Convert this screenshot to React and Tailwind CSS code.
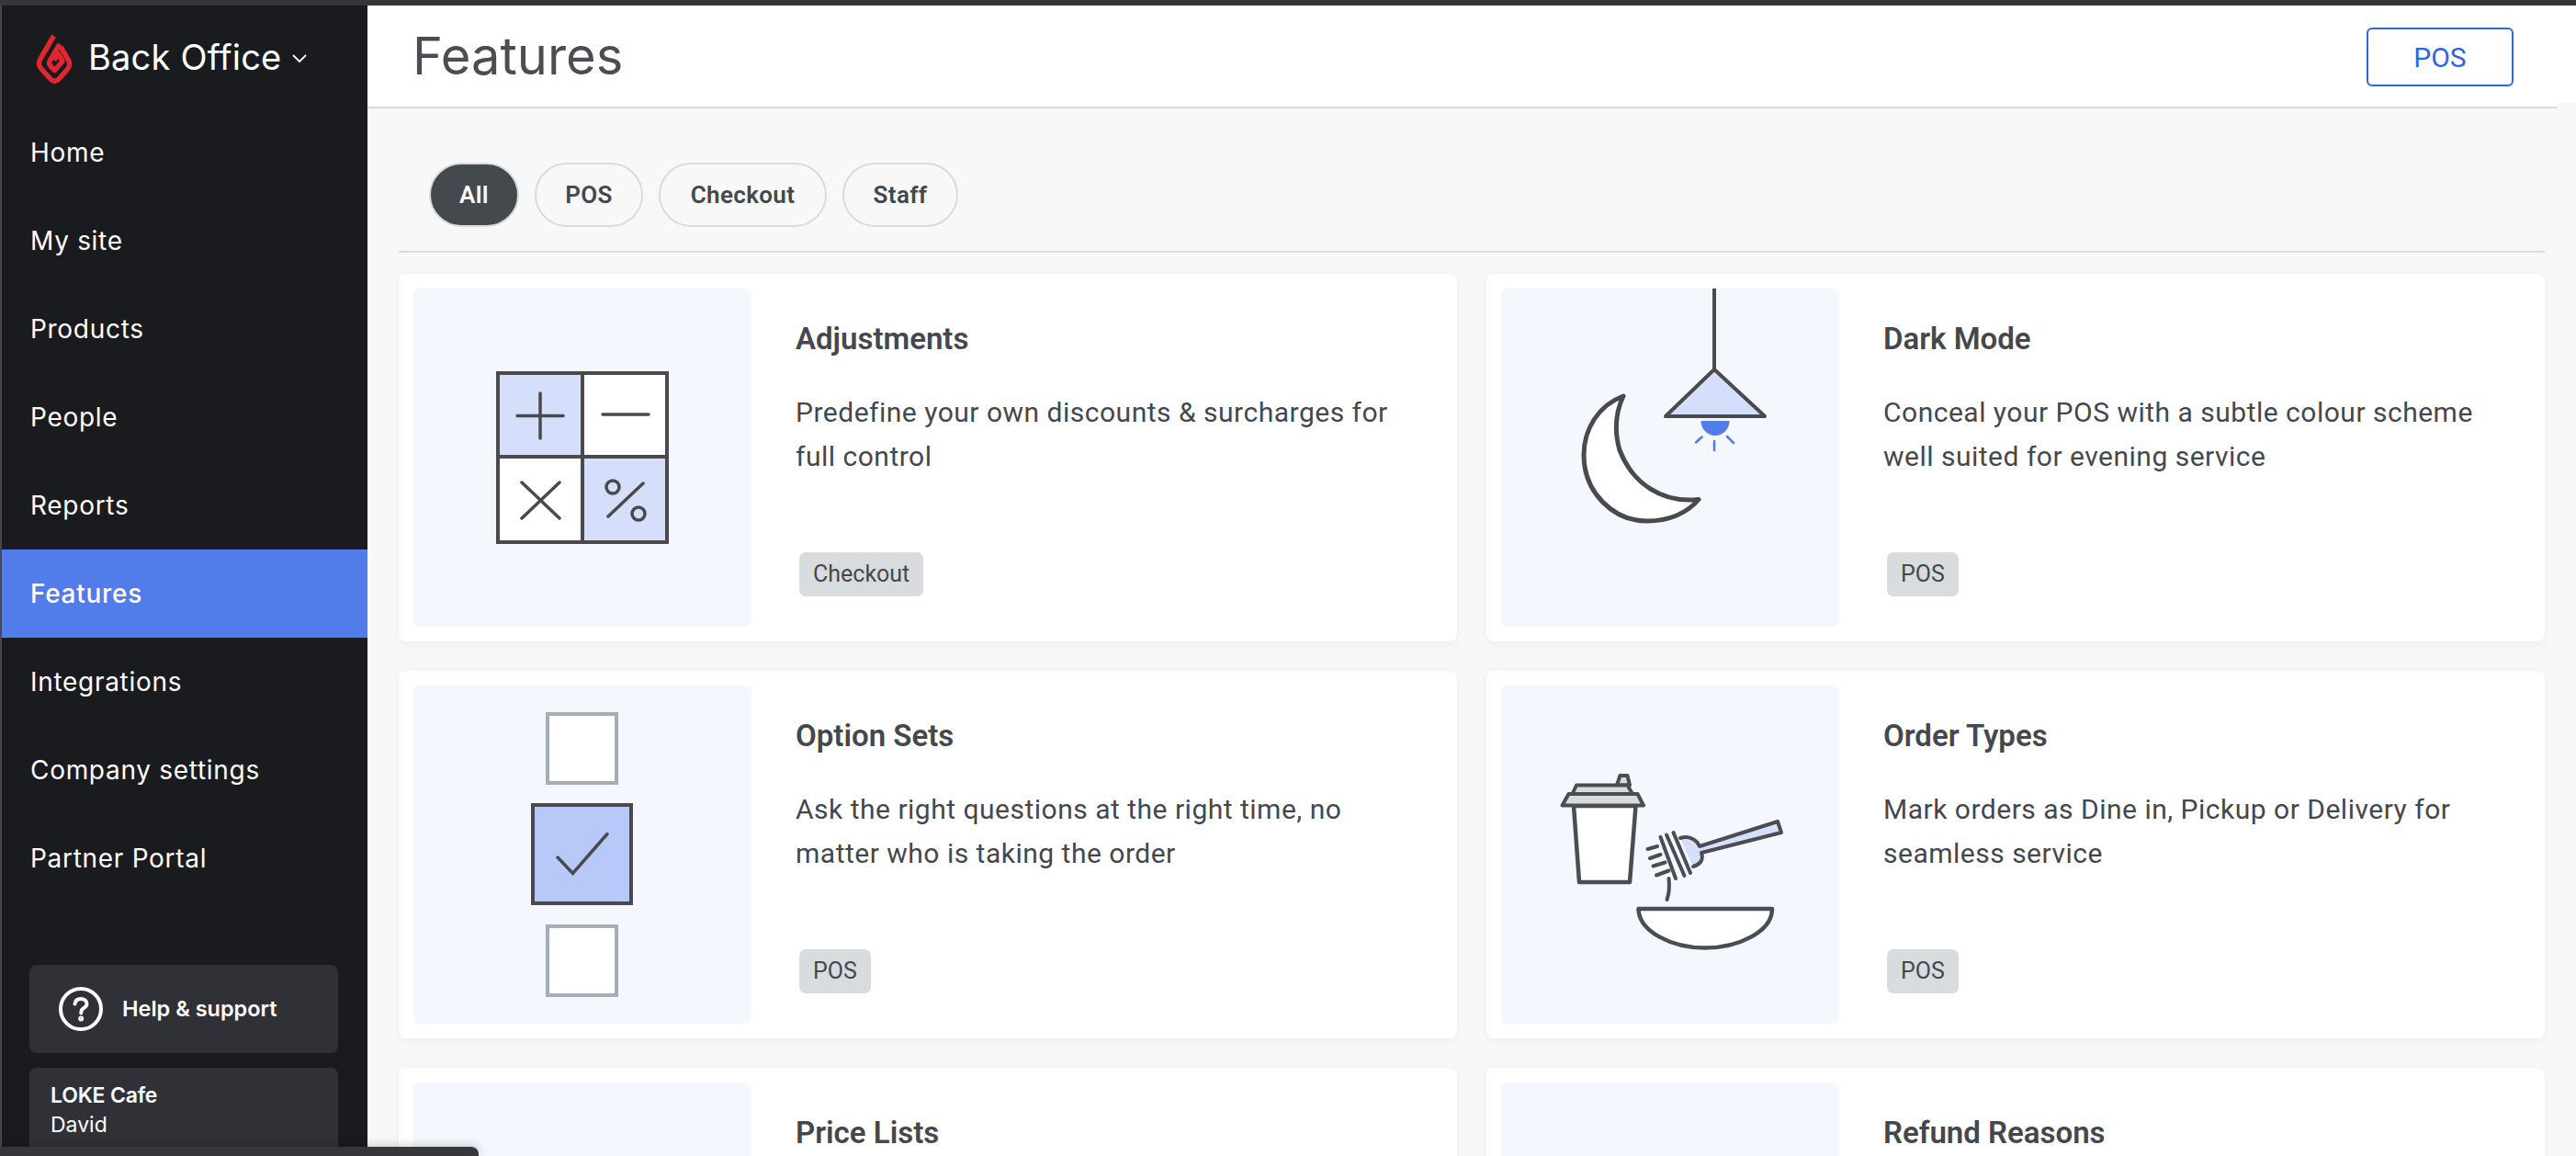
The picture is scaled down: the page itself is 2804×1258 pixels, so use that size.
import React from 'react';

const navItems = ['Home', 'My site', 'Products', 'People', 'Reports', 'Features', 'Integrations', 'Company settings', 'Partner Portal'];
const filters = [
  { label: 'All', width: 'w-[98px]' },
  { label: 'POS', width: 'w-[118px]' },
  { label: 'Checkout', width: 'w-[183px]' },
  { label: 'Staff', width: 'w-[126px]' },
];

const INK = '#4a4a4c';
const TINT = '#d5dffb';

function Logo() {
  return (
    <svg width="60" height="70" viewBox="0 0 60 70" className="shrink-0 ml-[28px]" fill="none" stroke="#e0262e" strokeWidth="5.5" strokeLinejoin="round">
      <path d="M28.5 12 L14 37 Q10.5 43 15 48 L25 59 Q29.5 63.5 34 59 L43 49 Q47.5 43.5 44.5 38.5 L36 24" />
      <path d="M35 21 L24.5 38.5 Q22.5 42 25 45 L29.5 49.5 L37 41 Q38.5 39.5 37 37.5 L33.5 32 L29 38.5" />
    </svg>
  );
}

function AdjustmentsArt() {
  return (
    <svg viewBox="0 0 368 368" className="w-full h-full" fill="none" stroke={INK} strokeLinecap="round">
      <rect x="92" y="92" width="92" height="91" fill={TINT} />
      <rect x="184" y="92" width="92" height="91" fill="#fff" />
      <rect x="92" y="183" width="92" height="93" fill="#fff" />
      <rect x="184" y="183" width="92" height="93" fill={TINT} />
      <rect x="92" y="92" width="184" height="184" strokeWidth="4" />
      <path d="M184 92V276M92 183H276" strokeWidth="4" strokeLinecap="butt" />
      <path d="M113 138.5H163M138 114V163M206 137H256M118 211L159 250M159 211L118 250M250 212L212 248" strokeWidth="3.5" />
      <circle cx="217" cy="216" r="7" strokeWidth="3.5" />
      <circle cx="245" cy="245" r="7" strokeWidth="3.5" />
    </svg>
  );
}

function DarkModeArt() {
  return (
    <svg viewBox="0 0 368 368" className="w-full h-full" fill="none" stroke={INK} strokeLinecap="round" strokeLinejoin="round">
      <path d="M232 0V88" strokeWidth="4" strokeLinecap="butt" />
      <path d="M232 88L179 139H287Z" fill={TINT} strokeWidth="4" />
      <path d="M217.5 144H248.5A15.5 16 0 0 1 217.5 144Z" fill="#527cea" stroke="none" />
      <path d="M232 166V176M218.5 161.5L212 167.5M246 161L253 168" stroke="#527cea" strokeWidth="2.5" />
      <path d="M133 117C106 127 90 153 90 181C90 222 122 253 159 253C183 253 203 244 215 229.5C175 234 143 212 129 176C123 155 124 136 133 117Z" fill="#fff" strokeWidth="5" />
    </svg>
  );
}

function OptionSetsArt() {
  return (
    <svg viewBox="0 0 368 368" className="w-full h-full" fill="none">
      <rect x="146" y="31" width="75" height="75" fill="#fff" stroke="#a5adb5" strokeWidth="4" />
      <rect x="130" y="130" width="107" height="107" fill="#b8c8f8" stroke={INK} strokeWidth="4" />
      <rect x="146" y="262" width="75" height="75" fill="#fff" stroke="#a5adb5" strokeWidth="4" />
      <path d="M157 187L173.5 204.5L211 161.5" stroke={INK} strokeWidth="3.5" strokeLinecap="round" />
    </svg>
  );
}

function OrderTypesArt() {
  return (
    <svg viewBox="0 0 368 368" className="w-full h-full" fill="none" stroke="#4a4d52" strokeLinecap="round" strokeLinejoin="round">
      <path d="M79 131H146.5L140 214H85Z" fill="#fff" strokeWidth="4.5" />
      <path d="M126 108.5L129.5 98H137.5L140 108.5Z" fill="#d8dcdf" strokeWidth="4" />
      <path d="M77.5 118L82 108.5H137.5L143 118Z" fill="#d8dcdf" strokeWidth="4" />
      <path d="M66.5 130.5L73.5 118H148.5L155 130.5Z" fill="#d8dcdf" strokeWidth="4" />
      <path d="M195 166C205 163 213 168 216 175L301 148L305 160L218 182C221 190 216 195 209 197" fill={TINT} strokeWidth="4" />
      <path d="M173.5 165L190 210M180 162.5L199.5 207M187.5 160L206 204" strokeWidth="4" />
      <path d="M159.5 178L170 175M162 188L173.5 184M165.5 196.5L178.5 192.5M169 206.5L182.5 201.5" strokeWidth="4" />
      <path d="M182.5 210C183.5 219 183 226 180.5 233" strokeWidth="4" />
      <path d="M149.5 243H295C295 268 258 285.5 222 285.5C186 285.5 150 268 149.5 243Z" fill="#fff" strokeWidth="4.5" />
    </svg>
  );
}

const features = [
  { title: 'Adjustments', desc: 'Predefine your own discounts & surcharges for full control', tag: 'Checkout', art: <AdjustmentsArt /> },
  { title: 'Dark Mode', desc: 'Conceal your POS with a subtle colour scheme well suited for evening service', tag: 'POS', art: <DarkModeArt /> },
  { title: 'Option Sets', desc: 'Ask the right questions at the right time, no matter who is taking the order', tag: 'POS', art: <OptionSetsArt /> },
  { title: 'Order Types', desc: 'Mark orders as Dine in, Pickup or Delivery for seamless service', tag: 'POS', art: <OrderTypesArt /> },
  { title: 'Price Lists', desc: '', tag: null, art: null },
  { title: 'Refund Reasons', desc: '', tag: null, art: null },
];

function FeatureCard({ feature }) {
  return (
    <div className="h-[400px] rounded-[8px] bg-white p-[16px] flex gap-[48px] shadow-[0_2px_10px_rgba(0,0,0,0.05)]">
      <div className="w-[368px] h-[368px] shrink-0 rounded-[6px] bg-[#f4f7fe] overflow-hidden">{feature.art}</div>
      <div className="flex-1 flex flex-col items-start pt-[37px]">
        <h3 className="text-[33px] leading-[36px] font-semibold text-[#44484d]">{feature.title}</h3>
        <p className="mt-[38px] text-[30px] leading-[48px] tracking-[0.5px] text-[#44484d] max-w-[660px] h-[96px]">{feature.desc}</p>
        {feature.tag && (
          <span className="mt-[80px] ml-[4px] h-[48px] px-[15px] flex items-center rounded-[7px] bg-[#d8dcdf] text-[25px] text-[#44484d]">{feature.tag}</span>
        )}
      </div>
    </div>
  );
}

export default function App() {
  return (
    <div className="relative w-[2804px] h-[1258px] overflow-hidden flex flex-col bg-[#f8f8f8] font-['Roboto',sans-serif]">
      <div className="h-[6px] shrink-0 bg-[#35363a]" />
      <div className="flex-1 flex min-h-0">
        {/* Sidebar */}
        <aside className="w-[400px] shrink-0 border-l-2 border-[#46474b] bg-[#191b1f] text-white font-['Inter',sans-serif] overflow-hidden">
          <div className="h-[112px] flex items-center">
            <Logo />
            <span className="text-[38px] leading-none ml-[6px] tracking-[0.2px]">Back Office</span>
            <svg width="16" height="10" viewBox="0 0 16 10" className="ml-[12px] mt-[4px]" fill="none" stroke="#fff" strokeWidth="1.8">
              <path d="M1 1L8 8L15 1" />
            </svg>
          </div>
          <nav>
            {navItems.map((item) => (
              <div
                key={item}
                className={item === 'Features'
                  ? 'h-[96px] -ml-[2px] pl-[31px] flex items-center text-[28px] tracking-[0.7px] font-medium bg-[#527cea] border-l-2 border-[#7c9af0]'
                  : 'h-[96px] pl-[31px] flex items-center text-[28px] tracking-[0.7px]'}
              >
                {item}
              </div>
            ))}
          </nav>
          <div className="mt-[68px] ml-[30px] w-[336px] h-[96px] rounded-[8px] bg-[#303136] flex items-center pl-[32px] gap-[21px]">
            <svg width="48" height="48" viewBox="0 0 48 48" fill="none" stroke="#fff" strokeWidth="4" strokeLinecap="round">
              <circle cx="24" cy="24" r="22" />
              <path d="M17.5 18.5C18 14.5 21 13 24 13C27.5 13 30.5 15 30.5 18.5C30.5 22 26.5 23 25 25C24.5 26 24.3 27 24.3 28.5" />
              <circle cx="24.2" cy="34.5" r="1" fill="#fff" />
            </svg>
            <span className="text-[23.5px] font-semibold">Help &amp; support</span>
          </div>
          <div className="mt-[16px] ml-[30px] w-[336px] h-[96px] rounded-[8px] bg-[#303136] pl-[23px] pt-[14px]">
            <div className="text-[23px] leading-[32px] font-semibold tracking-[-0.2px]">LOKE Cafe</div>
            <div className="text-[23px] leading-[32px]">David</div>
          </div>
        </aside>

        {/* Main */}
        <main className="flex-1 min-w-0 flex flex-col">
          <header className="h-[106px] shrink-0 bg-white flex items-center justify-between pl-[49px] pr-[68px]">
            <h1 className="text-[56px] leading-none text-[#4a4d52] font-['Inter',sans-serif] mt-[4px]">Features</h1>
            <button className="w-[160px] h-[64px] mt-[6px] rounded-[6px] border-2 border-[#2d66dc] text-[30px] text-[#2d66dc]">POS</button>
          </header>
          <div className="h-[6px] shrink-0 mr-[20px] bg-white border-b-2 border-[#d8dbdf]" />
          <div className="flex-1 min-h-0 px-[34px]">
            <div className="pt-[59px] pb-[26px] pl-[33px] flex gap-[17px] border-b-2 border-[#d8dbdf]">
              {filters.map((f) => (
                <button
                  key={f.label}
                  className={`${f.width} h-[70px] rounded-full border-2 border-[#d8dbdf] text-[26px] tracking-[0.35px] font-semibold ${f.label === 'All' ? 'bg-[#44494e] text-white' : 'text-[#44484d]'}`}
                >
                  {f.label}
                </button>
              ))}
            </div>
            <div className="mt-[23px] grid grid-cols-2 gap-[32px]">
              {features.map((feature) => (
                <FeatureCard key={feature.title} feature={feature} />
              ))}
            </div>
          </div>
        </main>
      </div>
      <div className="absolute left-0 bottom-0 w-[521px] h-[10px] rounded-tr-[8px] bg-[#36373b] shadow-[0_0_12px_rgba(0,0,0,0.25)]" />
    </div>
  );
}
